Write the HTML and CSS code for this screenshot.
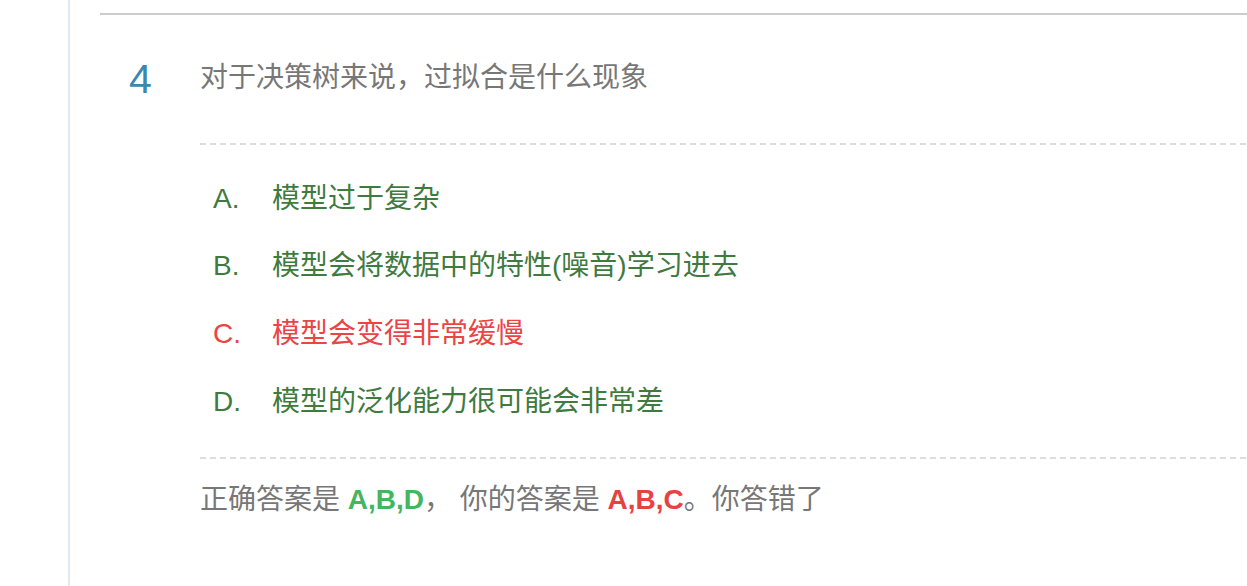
FILE: index.html
```html
<!DOCTYPE html>
<html lang="zh-CN">
<head>
<meta charset="utf-8">
<title>题目 4</title>
<link rel="stylesheet" href="styles.css">
</head>
<body>
<div class="page">
  <aside class="sidebar"></aside>
  <main class="main">
    <section class="question">
      <div class="q-num">4</div>
      <div class="q-body">
        <div class="q-title">对于决策树来说，过拟合是什么现象</div>
        <div class="divider"></div>
        <ul class="options">
          <li class="option ok"><span class="opt-key">A.</span><span class="opt-text">模型过于复杂</span></li>
          <li class="option ok"><span class="opt-key">B.</span><span class="opt-text">模型会将数据中的特性(噪音)学习进去</span></li>
          <li class="option bad"><span class="opt-key">C.</span><span class="opt-text">模型会变得非常缓慢</span></li>
          <li class="option ok"><span class="opt-key">D.</span><span class="opt-text">模型的泛化能力很可能会非常差</span></li>
        </ul>
        <div class="divider"></div>
        <div class="result">正确答案是 <b class="right">A,B,D</b>， 你的答案是 <b class="wrong">A,B,C</b>。你答错了</div>
      </div>
    </section>
  </main>
</div>
</body>
</html>
```

FILE: styles.css
```css
html, body {
  margin: 0;
  padding: 0;
  background: #fff;
}
body {
  font-family: "Liberation Sans", Arial, "Noto Sans CJK SC", sans-serif;
  color: #777;
}
.page {
  display: flex;
  min-height: 586px;
}
.sidebar {
  width: 68px;
  flex: none;
  border-right: 2px solid #e2ebf5;
}
.main {
  flex: 1;
  padding-left: 30px;
  padding-top: 13px;
}
.question {
  border-top: 2px solid #cccccc;
  display: flex;
  padding-top: 43px;
}
.q-num {
  width: 71px;
  padding-left: 29px;
  flex: none;
  font-size: 41px;
  line-height: 42px;
  color: #3b87ae;
}
.q-body {
  flex: 1;
}
.q-title {
  font-size: 28px;
  line-height: 40px;
  color: #777;
}
.divider {
  height: 2px;
  background-image: repeating-linear-gradient(to right, #dddddd 0 6px, transparent 6px 10px);
}
.q-title + .divider {
  margin-top: 45px;
}
.options {
  list-style: none;
  margin: 20px 0 22px;
  padding: 0;
}
.option {
  display: flex;
  font-size: 28px;
  line-height: 40px;
  padding: 13.8px 0;
}
.option.ok { color: #3f7a3f; }
.option.bad { color: #ea4444; }
.opt-key {
  width: 59px;
  padding-left: 13px;
  flex: none;
}
.result {
  margin-top: 21px;
  font-size: 28px;
  line-height: 40px;
  color: #777;
}
.result b { font-weight: bold; }
.right { color: #45b55e; }
.wrong { color: #e84141; }
```
